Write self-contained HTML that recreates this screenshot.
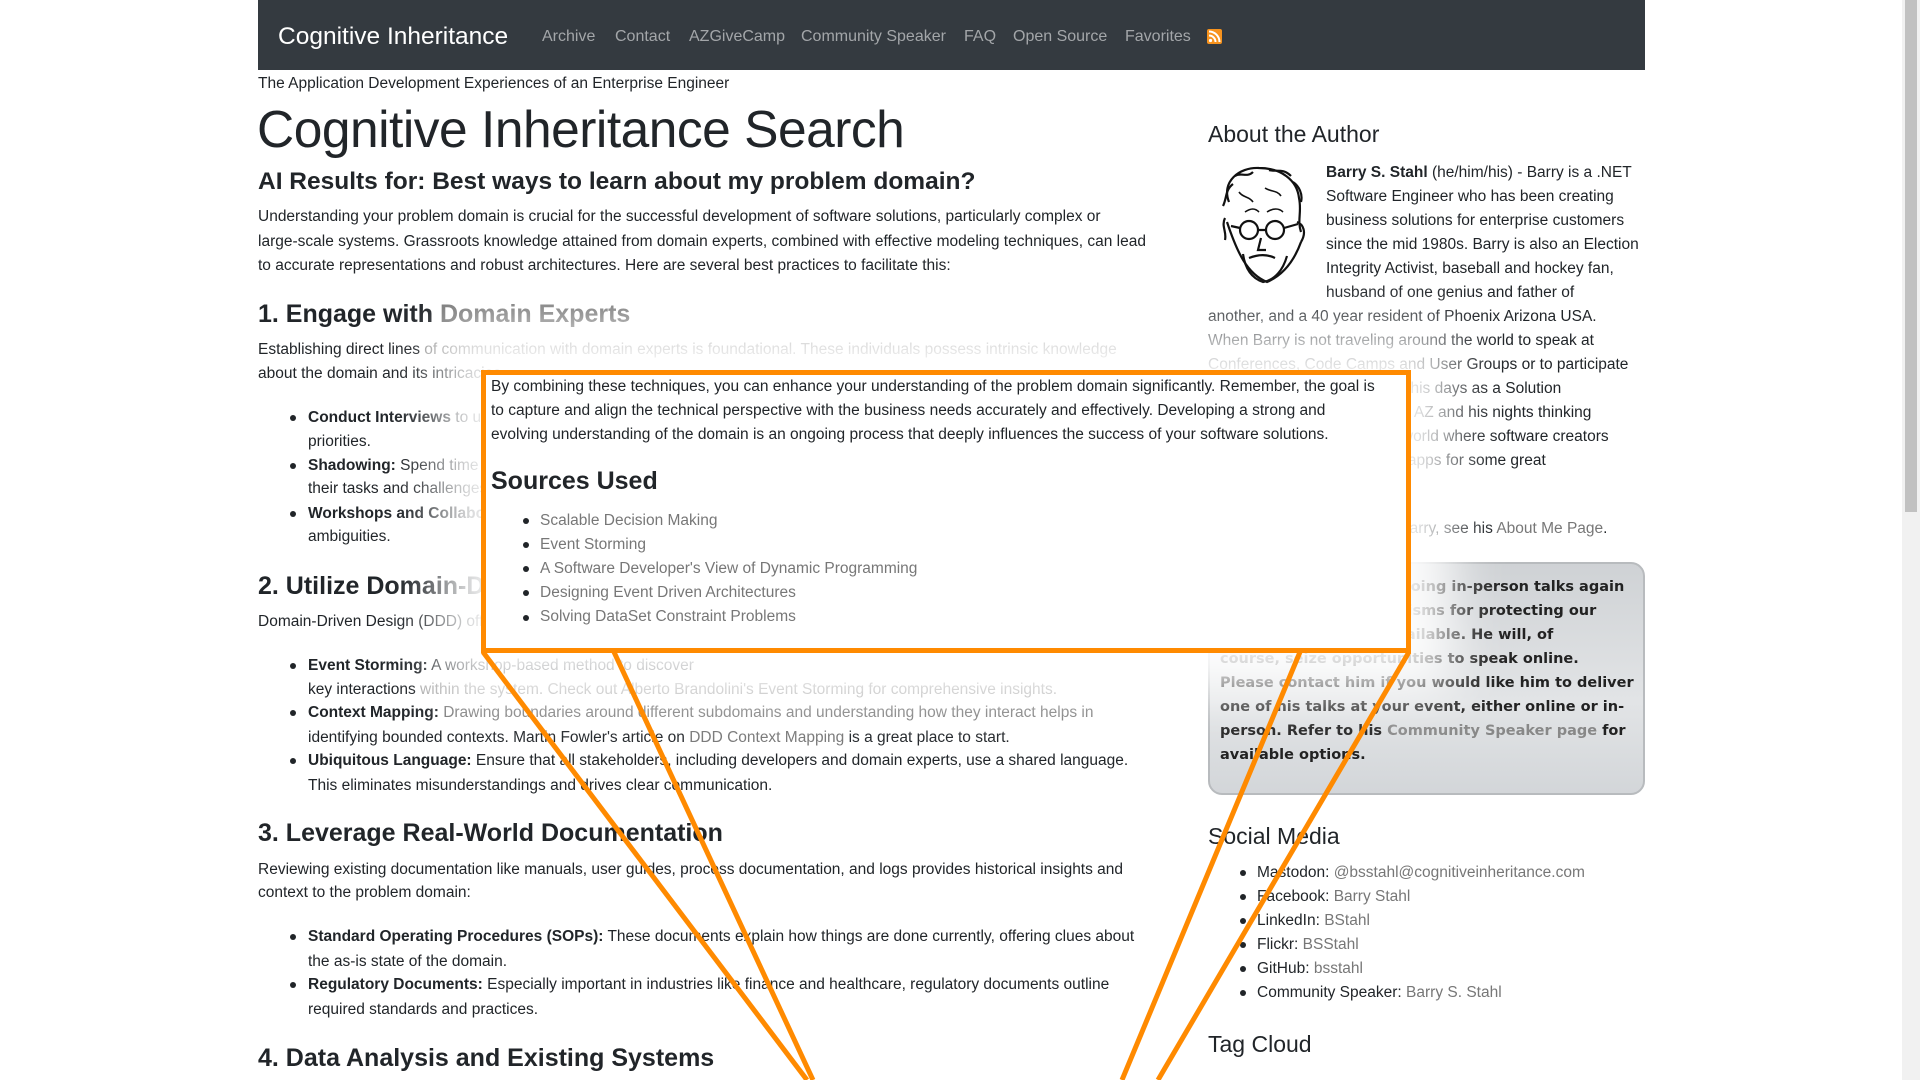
<!DOCTYPE html>
<html><head><meta charset="utf-8">
<style>
*{margin:0;padding:0;box-sizing:border-box}
html,body{width:1920px;height:1080px;overflow:hidden;background:#fff}
body{font-family:"Liberation Sans",sans-serif;color:#212529;font-size:15.5px;position:relative}
.l{position:absolute;white-space:nowrap;line-height:24px}
.m{position:absolute;left:0;top:2px;width:1920px;height:1080px}
a,.a{color:#777}
.nav{position:absolute;left:258px;top:0;width:1387px;height:70px;background:#343a40}
.nav .b{position:absolute;left:20px;top:23px;color:#fff;font-size:24.5px}
.nav .n{position:absolute;top:28px;color:#a3a6a9;font-size:16px}
.h1{position:absolute;left:257px;top:97px;font-size:51.5px;line-height:60px;letter-spacing:-0.5px}
.h2{position:absolute;left:258px;top:164px;font-size:24.5px;font-weight:bold;line-height:32px}
.h3{position:absolute;left:258px;font-size:25px;font-weight:bold;line-height:32px}
.side{position:absolute;font-size:23px;font-weight:300;color:#212529;line-height:30px}
.dot{position:absolute;width:6px;height:6px;border-radius:3px;background:#212529}
.call{position:absolute;left:1208px;top:560px;width:437px;height:233px;border:2px solid #b8bbbe;border-radius:14px;background:linear-gradient(#cfd2d5,#e2e4e6 60%,#d3d6d9)}
.call .l{font-family:"DejaVu Sans",sans-serif;font-weight:bold;font-size:14.5px;color:#222}
.ov{position:absolute;left:481px;top:370px;width:930px;height:283px;border:5px solid #ff8a00;background:#fff;box-shadow:0 0 50px 40px rgba(255,255,255,.94)}
.ov .l{font-size:15.5px}
.sb{position:absolute;left:1902px;top:0;width:18px;height:1080px;background:#f1f1f1}
.sb div{position:absolute;left:3px;top:0;width:12px;height:512px;background:#c1c1c1}
</style></head><body>

<div class="nav">
<div class="b">Cognitive Inheritance</div>
<div class="n" style="left:284px">Archive</div>
<div class="n" style="left:357px">Contact</div>
<div class="n" style="left:431px">AZGiveCamp</div>
<div class="n" style="left:543px">Community Speaker</div>
<div class="n" style="left:706px">FAQ</div>
<div class="n" style="left:755px">Open Source</div>
<div class="n" style="left:867px">Favorites</div>
<svg style="position:absolute;left:949px;top:29px" width="15" height="15" viewBox="0 0 15 15"><rect width="15" height="15" rx="2" fill="#f7931e"/><circle cx="3.5" cy="11.5" r="1.6" fill="#fff"/><path d="M2 6.5a6.5 6.5 0 0 1 6.5 6.5M2 2.5a10.5 10.5 0 0 1 10.5 10.5" stroke="#fff" stroke-width="2" fill="none"/></svg>
</div>

<div class="m">
<div class="l" style="left:258px;top:70px">The Application Development Experiences of an Enterprise Engineer</div>
<div class="h1">Cognitive Inheritance Search</div>
<div class="h2">AI Results for: Best ways to learn about my problem domain?</div>

<div class="l" style="left:258px;top:203px">Understanding your problem domain is crucial for the successful development of software solutions, particularly complex or</div>
<div class="l" style="left:258px;top:228px">large-scale systems. Grassroots knowledge attained from domain experts, combined with effective modeling techniques, can lead</div>
<div class="l" style="left:258px;top:252px">to accurate representations and robust architectures. Here are several best practices to facilitate this:</div>

<div class="h3" style="top:296px">1. Engage with <span class="a">Domain Experts</span></div>
<div class="l" style="left:258px;top:336px">Establishing direct lines <span style="color:#999">of communication with domain experts is foundational. These individuals possess intrinsic knowledge</span></div>
<div class="l" style="left:258px;top:360px">about the domain and its intricacies.</div>

<div class="dot" style="left:290px;top:413px"></div><div class="l" style="left:308px;top:404px"><b>Conduct Interviews</b> to understand key priorities.</div>
<div class="l" style="left:308px;top:428px">priorities.</div>
<div class="dot" style="left:290px;top:461px"></div><div class="l" style="left:308px;top:452px"><b>Shadowing:</b> Spend time with experts on</div>
<div class="l" style="left:308px;top:475px">their tasks and challenges.</div>
<div class="dot" style="left:290px;top:509px"></div><div class="l" style="left:308px;top:500px"><b>Workshops and Collaborative Sessions</b></div>
<div class="l" style="left:308px;top:523px">ambiguities.</div>

<div class="h3" style="top:568px">2. Utilize Domain-Driven Design</div>
<div class="l" style="left:258px;top:608px">Domain-Driven Design (DDD) offers a set of tools.</div>

<div class="dot" style="left:290px;top:661px"></div><div class="l" style="left:308px;top:652px"><b>Event Storming:</b> A workshop-based method to discover</div>
<div class="l" style="left:308px;top:676px">key interactions <span style="color:#aaa">within the system. Check out Alberto Brandolini's Event Storming for comprehensive insights.</span></div>
<div class="dot" style="left:290px;top:708px"></div><div class="l" style="left:308px;top:699px"><b>Context Mapping:</b> <span style="color:#777">Drawing boundaries around different subdomains and understanding how they interact helps in</span></div>
<div class="l" style="left:308px;top:724px">identifying bounded contexts. Martin Fowler's article on <span class="a">DDD Context Mapping</span> is a great place to start.</div>
<div class="dot" style="left:290px;top:756px"></div><div class="l" style="left:308px;top:747px"><b>Ubiquitous Language:</b> Ensure that all stakeholders, including developers and domain experts, use a shared language.</div>
<div class="l" style="left:308px;top:772px">This eliminates misunderstandings and drives clear communication.</div>

<div class="h3" style="top:815px">3. Leverage Real-World Documentation</div>
<div class="l" style="left:258px;top:856px">Reviewing existing documentation like manuals, user guides, process documentation, and logs provides historical insights and</div>
<div class="l" style="left:258px;top:879px">context to the problem domain:</div>
<div class="dot" style="left:290px;top:932px"></div><div class="l" style="left:308px;top:923px"><b>Standard Operating Procedures (SOPs):</b> These documents explain how things are done currently, offering clues about</div>
<div class="l" style="left:308px;top:948px">the as-is state of the domain.</div>
<div class="dot" style="left:290px;top:980px"></div><div class="l" style="left:308px;top:971px"><b>Regulatory Documents:</b> Especially important in industries like finance and healthcare, regulatory documents outline</div>
<div class="l" style="left:308px;top:996px">required standards and practices.</div>
<div class="h3" style="top:1040px">4. Data Analysis and Existing Systems</div>

<div class="side" style="left:1208px;top:117px">About the Author</div>
<svg style="position:absolute;left:1209px;top:160px" width="110" height="125" viewBox="0 0 110 125" fill="none" stroke="#111" stroke-width="2.2">
<path d="M20 40c-8-20 10-35 30-34 22 0 38 12 40 30 3 14-2 22 2 34"/>
<path d="M14 44c4-8 2-16 10-22M26 14c6-4 12 2 18-4M60 8c8 2 14-2 22 6M84 20c6 4 10 12 8 20M16 56c-4 8 2 14 0 22"/>
<path d="M18 60c10 30 20 52 40 60 14-6 26-18 34-40M88 60c6 2 10 10 4 20"/>
<circle cx="40" cy="68" r="9"/><circle cx="66" cy="68" r="9"/><path d="M49 68h8M22 64l9 2M75 66l14-4"/>
<path d="M52 76l-3 12h8M40 96c10-4 18-4 26 0M34 92c2 14 8 24 20 28 12-2 20-12 24-26"/>
<path d="M30 30c4 6 10 4 14 10M56 26c6 4 12 2 16 8M36 50c6-4 10-4 14 0M58 50c6-4 12-4 16 0" stroke-width="1.6"/>
</svg>
<div class="l" style="left:1326px;top:159px"><b>Barry S. Stahl</b> (he/him/his) - Barry is a .NET</div>
<div class="l" style="left:1326px;top:183px">Software Engineer who has been creating</div>
<div class="l" style="left:1326px;top:207px">business solutions for enterprise customers</div>
<div class="l" style="left:1326px;top:231px">since the mid 1980s. Barry is also an Election</div>
<div class="l" style="left:1326px;top:255px">Integrity Activist, baseball and hockey fan,</div>
<div class="l" style="left:1326px;top:279px">husband of one genius and father of</div>
<div class="l" style="left:1208px;top:303px">another, and a 40 year resident of Phoenix Arizona USA.</div>
<div class="l" style="left:1208px;top:327px">When Barry is not traveling around the world to speak at</div>
<div class="l" style="left:1208px;top:351px">Conferences, Code Camps and User Groups or to participate</div>
<div class="l" style="left:1208px;top:375px">in Hackathons, Barry spends his days as a Solution</div>
<div class="l" style="left:1208px;top:399px">Architect for a firm in Phoenix AZ and his nights thinking</div>
<div class="l" style="left:1208px;top:423px">about ways to build a better world where software creators</div>
<div class="l" style="left:1208px;top:447px">can build great products and apps for some great</div>
<div class="l" style="left:1208px;top:515px">For more information about Barry, see his <span class="a">About Me Page</span>.</div>

<div class="call">
<div class="l" style="left:10px;top:11px">Barry is not currently doing in-person talks again</div>
<div class="l" style="left:10px;top:35px">until there are mechanisms for protecting our</div>
<div class="l" style="left:10px;top:59px">community that are available. He will, of</div>
<div class="l" style="left:10px;top:83px">course, seize opportunities to speak online.</div>
<div class="l" style="left:10px;top:107px">Please contact him if you would like him to deliver</div>
<div class="l" style="left:10px;top:131px">one of his talks at your event, either online or in-</div>
<div class="l" style="left:10px;top:155px">person. Refer to his <span style="color:#888">Community Speaker page</span> for</div>
<div class="l" style="left:10px;top:179px">available options.</div>
</div>

<div class="side" style="left:1208px;top:819px">Social Media</div>
<div class="dot" style="left:1240px;top:868px"></div><div class="l" style="left:1257px;top:859px">Mastodon: <span class="a">@bsstahl@cognitiveinheritance.com</span></div>
<div class="dot" style="left:1240px;top:892px"></div><div class="l" style="left:1257px;top:883px">Facebook: <span class="a">Barry Stahl</span></div>
<div class="dot" style="left:1240px;top:916px"></div><div class="l" style="left:1257px;top:907px">LinkedIn: <span class="a">BStahl</span></div>
<div class="dot" style="left:1240px;top:940px"></div><div class="l" style="left:1257px;top:931px">Flickr: <span class="a">BSStahl</span></div>
<div class="dot" style="left:1240px;top:964px"></div><div class="l" style="left:1257px;top:955px">GitHub: <span class="a">bsstahl</span></div>
<div class="dot" style="left:1240px;top:988px"></div><div class="l" style="left:1257px;top:979px">Community Speaker: <span class="a">Barry S. Stahl</span></div>
<div class="side" style="left:1208px;top:1027px">Tag Cloud</div>
</div>

<div class="ov">
<div class="l" style="left:5px;top:0px">By combining these techniques, you can enhance your understanding of the problem domain significantly. Remember, the goal is</div>
<div class="l" style="left:5px;top:24px">to capture and align the technical perspective with the business needs accurately and effectively. Developing a strong and</div>
<div class="l" style="left:5px;top:48px">evolving understanding of the domain is an ongoing process that deeply influences the success of your software solutions.</div>
<div class="l" style="left:5px;top:90px;font-size:25px;font-weight:bold;line-height:32px">Sources Used</div>
<div class="dot" style="left:37px;top:143px"></div><div class="l a" style="left:54px;top:134px">Scalable Decision Making</div>
<div class="dot" style="left:37px;top:167px"></div><div class="l a" style="left:54px;top:158px">Event Storming</div>
<div class="dot" style="left:37px;top:191px"></div><div class="l a" style="left:54px;top:182px">A Software Developer's View of Dynamic Programming</div>
<div class="dot" style="left:37px;top:215px"></div><div class="l a" style="left:54px;top:206px">Designing Event Driven Architectures</div>
<div class="dot" style="left:37px;top:240px"></div><div class="l a" style="left:54px;top:230px">Solving DataSet Constraint Problems</div>
</div>
<svg style="position:absolute;left:0;top:0" width="1920" height="1080">
<g stroke="#ff8a00" stroke-width="5" fill="none">
<line x1="483" y1="652" x2="807" y2="1080"/>
<line x1="614" y1="652" x2="813" y2="1080"/>
<line x1="1300" y1="652" x2="1122" y2="1080"/>
<line x1="1409" y1="652" x2="1158" y2="1080"/>
</g></svg>

<div class="sb"><div></div></div>
</body></html>
